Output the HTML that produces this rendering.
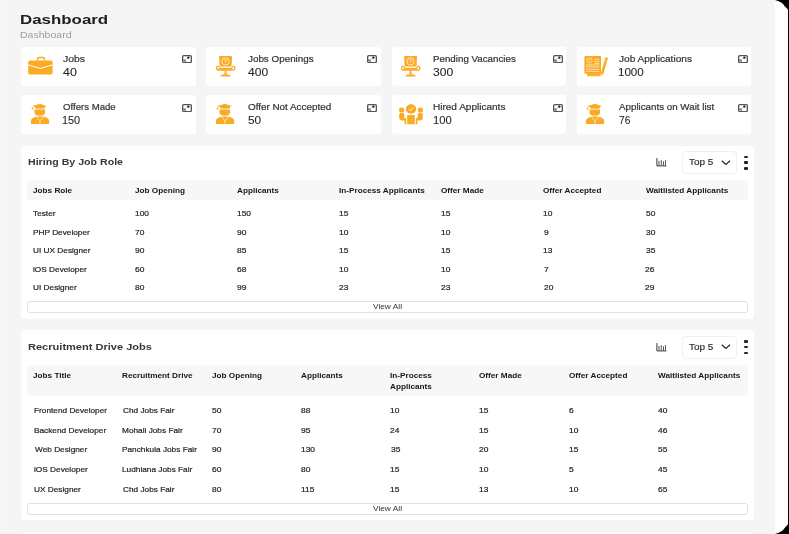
<!DOCTYPE html>
<html><head><meta charset="utf-8"><style>
html,body{margin:0;padding:0;}
body{width:789px;height:534px;overflow:hidden;background:#000;position:relative;font-family:"Liberation Sans",sans-serif;}
.t{position:absolute;white-space:nowrap;line-height:normal;transform-origin:0 0;will-change:transform;}
svg{display:block}
</style></head><body>
<div style="position:absolute;left:0px;top:0px;width:775px;height:534px;background:#f5f5f5"></div>
<div style="position:absolute;left:0px;top:0px;width:1px;height:534px;background:#f8f8f8"></div>
<div style="position:absolute;left:775px;top:0px;width:13px;height:534px;background:#fff;clip-path:polygon(0 0,3px 1px,5px 2px,7px 3px,8.5px 4.5px,9.5px 6px,11px 7.5px,12.5px 9px,13px 10px,13px 524px,12.5px 525px,11px 526.5px,9.5px 528px,8.5px 529.5px,7px 531px,5px 532px,3px 533px,0 534px)"></div>
<div class="t" style="left:20.35px;top:11.80px;font-size:13.2px;color:#1e1e1e;font-weight:bold;letter-spacing:0.000px;transform:scaleX(1.2798);">Dashboard</div>
<div class="t" style="left:20.28px;top:30.00px;font-size:9px;color:#9d9d9d;letter-spacing:0.000px;transform:scaleX(1.1710);">Dashboard</div>
<div style="position:absolute;left:21.0px;top:47px;width:174.7px;height:39px;background:#fff;border-radius:3px"></div>
<div class="t" style="left:62.98px;top:54.20px;font-size:9px;color:#343434;letter-spacing:0.000px;transform:scaleX(1.1559);-webkit-text-stroke:0.2px #343434;">Jobs</div>
<div class="t" style="left:62.85px;top:66.90px;font-size:10px;color:#262626;letter-spacing:0.000px;transform:scaleX(1.2453);-webkit-text-stroke:0.08px #262626;">40</div>
<div style="position:absolute;left:27px;top:54px;width:27px;height:27px"><svg width="27" height="27" viewBox="0 0 27 27"><path d="M10.6 6.6 V4.8 a1.2 1.2 0 0 1 1.2-1.2 h4.5 a1.2 1.2 0 0 1 1.2 1.2 V6.6" fill="none" stroke="#fbaa24" stroke-width="1.5"/><rect x="1.2" y="6.4" width="24.4" height="14.2" rx="2" fill="#fbaa24"/><path d="M1.2 10.9 L13.4 14.4 L25.6 10.9" fill="none" stroke="#fff" stroke-width="1"/></svg></div>
<div style="position:absolute;left:182.00px;top:55px;width:10px;height:8px"><svg width="10" height="8" viewBox="0 0 10 8"><rect x="0.65" y="0.65" width="8.7" height="6.9" rx="1.1" fill="none" stroke="#555" stroke-width="1.3"/><path d="M3.4 4.6 L6 2.9" stroke="#aaa" stroke-width="0.8"/><circle cx="6.4" cy="2.7" r="1.15" fill="#1a1a1a"/><path d="M1.1 5.1 H3.1 V7.2" fill="none" stroke="#444" stroke-width="1"/></svg></div>
<div style="position:absolute;left:206.27px;top:47px;width:174.7px;height:39px;background:#fff;border-radius:3px"></div>
<div class="t" style="left:248.49px;top:54.20px;font-size:9px;color:#343434;letter-spacing:0.000px;transform:scaleX(1.0940);-webkit-text-stroke:0.2px #343434;">Jobs Openings</div>
<div class="t" style="left:248.36px;top:66.90px;font-size:10px;color:#262626;letter-spacing:0.000px;transform:scaleX(1.2112);-webkit-text-stroke:0.08px #262626;">400</div>
<div style="position:absolute;left:212px;top:54px;width:27px;height:27px"><svg width="27" height="27" viewBox="0 0 27 27">
<path d="M7.8 2.1 H19.4 Q20 2.1 20 2.8 L19.6 11.6 Q19.5 12.6 18.6 12.6 H8.6 Q7.7 12.6 7.6 11.6 L7.1 2.8 Q7.1 2.1 7.8 2.1Z" fill="#fbaa24"/>
<circle cx="13.5" cy="7.4" r="3.6" fill="none" stroke="#fff" stroke-width="0.7"/>
<path d="M12.4 6.6 Q12.5 5.5 13.6 5.5 Q14.7 5.6 14.6 6.6 Q14.5 7.3 13.6 7.8 V8.6" fill="none" stroke="#fff" stroke-width="0.8"/>
<path d="M7.6 13.4 Q4.6 11 4.6 14 Q4.7 16.2 7 16.3 M19.6 13.4 Q22.8 11 22.8 14 Q22.7 16.2 20.4 16.3" fill="none" stroke="#fbaa24" stroke-width="1.4"/>
<rect x="6.8" y="13.7" width="13.6" height="3" rx="0.8" fill="#fbaa24"/>
<path d="M12.6 16.6 H14.5 L14.6 19.4 Q15 20.4 16.5 20.6 H10.6 Q12.2 20.4 12.5 19.4Z" fill="#fbaa24"/>
<path d="M10 20.4 H17.2 L19 22.6 H8Z" fill="#fbaa24"/>
</svg></div>
<div style="position:absolute;left:367.27px;top:55px;width:10px;height:8px"><svg width="10" height="8" viewBox="0 0 10 8"><rect x="0.65" y="0.65" width="8.7" height="6.9" rx="1.1" fill="none" stroke="#555" stroke-width="1.3"/><path d="M3.4 4.6 L6 2.9" stroke="#aaa" stroke-width="0.8"/><circle cx="6.4" cy="2.7" r="1.15" fill="#1a1a1a"/><path d="M1.1 5.1 H3.1 V7.2" fill="none" stroke="#444" stroke-width="1"/></svg></div>
<div style="position:absolute;left:391.54px;top:47px;width:174.7px;height:39px;background:#fff;border-radius:3px"></div>
<div class="t" style="left:433.14px;top:54.20px;font-size:9px;color:#343434;letter-spacing:0.000px;transform:scaleX(1.0842);-webkit-text-stroke:0.2px #343434;">Pending Vacancies</div>
<div class="t" style="left:433.42px;top:66.90px;font-size:10px;color:#262626;letter-spacing:0.000px;transform:scaleX(1.2075);-webkit-text-stroke:0.08px #262626;">300</div>
<div style="position:absolute;left:397px;top:54px;width:27px;height:27px"><svg width="27" height="27" viewBox="0 0 27 27">
<path d="M7.8 2.1 H19.4 Q20 2.1 20 2.8 L19.6 11.6 Q19.5 12.6 18.6 12.6 H8.6 Q7.7 12.6 7.6 11.6 L7.1 2.8 Q7.1 2.1 7.8 2.1Z" fill="#fbaa24"/>
<circle cx="13.5" cy="7.4" r="3.6" fill="none" stroke="#fff" stroke-width="0.7"/>
<path d="M12.4 6.6 Q12.5 5.5 13.6 5.5 Q14.7 5.6 14.6 6.6 Q14.5 7.3 13.6 7.8 V8.6" fill="none" stroke="#fff" stroke-width="0.8"/>
<path d="M7.6 13.4 Q4.6 11 4.6 14 Q4.7 16.2 7 16.3 M19.6 13.4 Q22.8 11 22.8 14 Q22.7 16.2 20.4 16.3" fill="none" stroke="#fbaa24" stroke-width="1.4"/>
<rect x="6.8" y="13.7" width="13.6" height="3" rx="0.8" fill="#fbaa24"/>
<path d="M12.6 16.6 H14.5 L14.6 19.4 Q15 20.4 16.5 20.6 H10.6 Q12.2 20.4 12.5 19.4Z" fill="#fbaa24"/>
<path d="M10 20.4 H17.2 L19 22.6 H8Z" fill="#fbaa24"/>
</svg></div>
<div style="position:absolute;left:552.54px;top:55px;width:10px;height:8px"><svg width="10" height="8" viewBox="0 0 10 8"><rect x="0.65" y="0.65" width="8.7" height="6.9" rx="1.1" fill="none" stroke="#555" stroke-width="1.3"/><path d="M3.4 4.6 L6 2.9" stroke="#aaa" stroke-width="0.8"/><circle cx="6.4" cy="2.7" r="1.15" fill="#1a1a1a"/><path d="M1.1 5.1 H3.1 V7.2" fill="none" stroke="#444" stroke-width="1"/></svg></div>
<div style="position:absolute;left:576.81px;top:47px;width:174.7px;height:39px;background:#fff;border-radius:3px"></div>
<div class="t" style="left:618.99px;top:54.20px;font-size:9px;color:#343434;letter-spacing:0.000px;transform:scaleX(1.1214);-webkit-text-stroke:0.2px #343434;">Job Applications</div>
<div class="t" style="left:618.29px;top:66.90px;font-size:10px;color:#262626;letter-spacing:0.000px;transform:scaleX(1.1557);-webkit-text-stroke:0.08px #262626;">1000</div>
<div style="position:absolute;left:582px;top:54px;width:27px;height:27px"><svg width="27" height="27" viewBox="0 0 27 27">
<rect x="5.1" y="18" width="13.6" height="4.3" rx="0.4" fill="#fbaa24" opacity="0.92"/>
<rect x="2.4" y="2.1" width="16.6" height="17.6" rx="0.8" fill="#fbaa24"/>
<circle cx="7.5" cy="6.5" r="2.6" fill="none" stroke="#fff" stroke-width="0.65" opacity="0.85"/>
<circle cx="7.5" cy="6.2" r="1" fill="#fff" opacity="0.5"/>
<path d="M12.4 5.5 H17.3 M12.4 7.5 H17.3 M12.4 9.4 H17.3 M4.1 10.9 H17.3 M4.1 12.9 H17.3 M4.1 15.3 H17.3 M4.1 17.4 H17.3" stroke="#fff" stroke-width="0.75" opacity="0.8"/>
<path d="M24.4 4.6 L20.3 19.2" stroke="#fbaa24" stroke-width="2.6" stroke-linecap="round"/>
<path d="M20.6 19.6 L19.4 21.6 L19.6 19.2Z" fill="#fbaa24"/>
<path d="M22.4 6.6 L24.1 7.1" stroke="#fff" stroke-width="0.6"/>
</svg></div>
<div style="position:absolute;left:737.81px;top:55px;width:10px;height:8px"><svg width="10" height="8" viewBox="0 0 10 8"><rect x="0.65" y="0.65" width="8.7" height="6.9" rx="1.1" fill="none" stroke="#555" stroke-width="1.3"/><path d="M3.4 4.6 L6 2.9" stroke="#aaa" stroke-width="0.8"/><circle cx="6.4" cy="2.7" r="1.15" fill="#1a1a1a"/><path d="M1.1 5.1 H3.1 V7.2" fill="none" stroke="#444" stroke-width="1"/></svg></div>
<div style="position:absolute;left:21.0px;top:94.5px;width:174.7px;height:39px;background:#fff;border-radius:3px"></div>
<div class="t" style="left:62.77px;top:102.00px;font-size:9px;color:#343434;letter-spacing:0.000px;transform:scaleX(1.0678);-webkit-text-stroke:0.2px #343434;">Offers Made</div>
<div class="t" style="left:62.44px;top:115.20px;font-size:10px;color:#262626;letter-spacing:0.000px;transform:scaleX(1.0897);-webkit-text-stroke:0.08px #262626;">150</div>
<div style="position:absolute;left:27px;top:102px;width:27px;height:27px"><svg width="27" height="27" viewBox="0 0 27 27">
<path d="M4.9 4.3 L13 1.7 L20 4.3 L13 6.3Z" fill="#fbaa24"/>
<rect x="8.2" y="4.6" width="9.6" height="2" fill="#fbaa24"/>
<circle cx="5.6" cy="6.6" r="1" fill="#fbaa24"/>
<path d="M7.5 7.4 H18 V10.2 Q18 13.8 12.75 13.8 Q7.5 13.8 7.5 10.2Z" fill="#fbaa24"/>
<path d="M3.9 22 V19.6 Q3.9 14.6 13 14.6 Q22.2 14.6 22.2 19.6 V22Z" fill="#fbaa24"/>
<path d="M9.6 15.2 L13 19 L16.4 15.2 M13 19 V22" fill="none" stroke="#fff" stroke-width="0.7" opacity="0.9"/>
</svg></div>
<div style="position:absolute;left:182.00px;top:103.5px;width:10px;height:8px"><svg width="10" height="8" viewBox="0 0 10 8"><rect x="0.65" y="0.65" width="8.7" height="6.9" rx="1.1" fill="none" stroke="#555" stroke-width="1.3"/><path d="M3.4 4.6 L6 2.9" stroke="#aaa" stroke-width="0.8"/><circle cx="6.4" cy="2.7" r="1.15" fill="#1a1a1a"/><path d="M1.1 5.1 H3.1 V7.2" fill="none" stroke="#444" stroke-width="1"/></svg></div>
<div style="position:absolute;left:206.27px;top:94.5px;width:174.7px;height:39px;background:#fff;border-radius:3px"></div>
<div class="t" style="left:248.16px;top:102.00px;font-size:9px;color:#343434;letter-spacing:0.000px;transform:scaleX(1.0954);-webkit-text-stroke:0.2px #343434;">Offer Not Accepted</div>
<div class="t" style="left:248.13px;top:115.20px;font-size:10px;color:#262626;letter-spacing:0.000px;transform:scaleX(1.1827);-webkit-text-stroke:0.08px #262626;">50</div>
<div style="position:absolute;left:212px;top:102px;width:27px;height:27px"><svg width="27" height="27" viewBox="0 0 27 27">
<path d="M4.9 4.3 L13 1.7 L20 4.3 L13 6.3Z" fill="#fbaa24"/>
<rect x="8.2" y="4.6" width="9.6" height="2" fill="#fbaa24"/>
<circle cx="5.6" cy="6.6" r="1" fill="#fbaa24"/>
<path d="M7.5 7.4 H18 V10.2 Q18 13.8 12.75 13.8 Q7.5 13.8 7.5 10.2Z" fill="#fbaa24"/>
<path d="M3.9 22 V19.6 Q3.9 14.6 13 14.6 Q22.2 14.6 22.2 19.6 V22Z" fill="#fbaa24"/>
<path d="M9.6 15.2 L13 19 L16.4 15.2 M13 19 V22" fill="none" stroke="#fff" stroke-width="0.7" opacity="0.9"/>
</svg></div>
<div style="position:absolute;left:367.27px;top:103.5px;width:10px;height:8px"><svg width="10" height="8" viewBox="0 0 10 8"><rect x="0.65" y="0.65" width="8.7" height="6.9" rx="1.1" fill="none" stroke="#555" stroke-width="1.3"/><path d="M3.4 4.6 L6 2.9" stroke="#aaa" stroke-width="0.8"/><circle cx="6.4" cy="2.7" r="1.15" fill="#1a1a1a"/><path d="M1.1 5.1 H3.1 V7.2" fill="none" stroke="#444" stroke-width="1"/></svg></div>
<div style="position:absolute;left:391.54px;top:94.5px;width:174.7px;height:39px;background:#fff;border-radius:3px"></div>
<div class="t" style="left:433.32px;top:102.00px;font-size:9px;color:#343434;letter-spacing:0.000px;transform:scaleX(1.1132);-webkit-text-stroke:0.2px #343434;">Hired Applicants</div>
<div class="t" style="left:433.31px;top:115.20px;font-size:10px;color:#262626;letter-spacing:0.000px;transform:scaleX(1.1218);-webkit-text-stroke:0.08px #262626;">100</div>
<div style="position:absolute;left:397px;top:102px;width:27px;height:27px"><svg width="27" height="27" viewBox="0 0 27 27">
<ellipse cx="14" cy="7" rx="5.2" ry="4.7" fill="#fbaa24"/>
<path d="M11.8 7.2 L13.5 8.7 L16.1 5.7" fill="none" stroke="#fff" stroke-width="1"/>
<rect x="10.2" y="13.1" width="7.6" height="9.2" fill="#fbaa24"/>
<circle cx="4.6" cy="8" r="2.6" fill="#fbaa24"/>
<circle cx="23.4" cy="8" r="2.6" fill="#fbaa24"/>
<path d="M2.2 12.4 Q2.2 10.9 3.6 10.9 H5.8 Q7.3 10.9 7.3 12.4 V16 H9.2 V22.3 H7.6 V18.4 H4.6 Q2.2 18.4 2.2 16Z" fill="#fbaa24"/>
<path d="M25.8 12.4 Q25.8 10.9 24.4 10.9 H22.2 Q20.7 10.9 20.7 12.4 V16 H18.8 V22.3 H20.4 V18.4 H23.4 Q25.8 18.4 25.8 16Z" fill="#fbaa24"/>
</svg></div>
<div style="position:absolute;left:552.54px;top:103.5px;width:10px;height:8px"><svg width="10" height="8" viewBox="0 0 10 8"><rect x="0.65" y="0.65" width="8.7" height="6.9" rx="1.1" fill="none" stroke="#555" stroke-width="1.3"/><path d="M3.4 4.6 L6 2.9" stroke="#aaa" stroke-width="0.8"/><circle cx="6.4" cy="2.7" r="1.15" fill="#1a1a1a"/><path d="M1.1 5.1 H3.1 V7.2" fill="none" stroke="#444" stroke-width="1"/></svg></div>
<div style="position:absolute;left:576.81px;top:94.5px;width:174.7px;height:39px;background:#fff;border-radius:3px"></div>
<div class="t" style="left:619.40px;top:102.00px;font-size:9px;color:#343434;letter-spacing:0.000px;transform:scaleX(1.0852);-webkit-text-stroke:0.2px #343434;">Applicants on Wait list</div>
<div class="t" style="left:618.89px;top:115.20px;font-size:10px;color:#262626;letter-spacing:0.000px;transform:scaleX(1.0196);-webkit-text-stroke:0.08px #262626;">76</div>
<div style="position:absolute;left:582px;top:102px;width:27px;height:27px"><svg width="27" height="27" viewBox="0 0 27 27">
<path d="M4.9 4.3 L13 1.7 L20 4.3 L13 6.3Z" fill="#fbaa24"/>
<rect x="8.2" y="4.6" width="9.6" height="2" fill="#fbaa24"/>
<circle cx="5.6" cy="6.6" r="1" fill="#fbaa24"/>
<path d="M7.5 7.4 H18 V10.2 Q18 13.8 12.75 13.8 Q7.5 13.8 7.5 10.2Z" fill="#fbaa24"/>
<path d="M3.9 22 V19.6 Q3.9 14.6 13 14.6 Q22.2 14.6 22.2 19.6 V22Z" fill="#fbaa24"/>
<path d="M9.6 15.2 L13 19 L16.4 15.2 M13 19 V22" fill="none" stroke="#fff" stroke-width="0.7" opacity="0.9"/>
</svg></div>
<div style="position:absolute;left:737.81px;top:103.5px;width:10px;height:8px"><svg width="10" height="8" viewBox="0 0 10 8"><rect x="0.65" y="0.65" width="8.7" height="6.9" rx="1.1" fill="none" stroke="#555" stroke-width="1.3"/><path d="M3.4 4.6 L6 2.9" stroke="#aaa" stroke-width="0.8"/><circle cx="6.4" cy="2.7" r="1.15" fill="#1a1a1a"/><path d="M1.1 5.1 H3.1 V7.2" fill="none" stroke="#444" stroke-width="1"/></svg></div>
<div style="position:absolute;left:21px;top:145.5px;width:733px;height:173px;background:#fff;border-radius:4px"></div>
<div class="t" style="left:27.65px;top:156.00px;font-size:9.8px;color:#383838;font-weight:bold;letter-spacing:0.000px;transform:scaleX(1.0842);">Hiring By Job Role</div>
<div style="position:absolute;left:656px;top:158.1px;width:11px;height:9px"><svg width="11" height="9" viewBox="0 0 11 9"><path d="M0.9 0.1 V7.9 H10.4" fill="none" stroke="#333" stroke-width="1"/><path d="M3 7.6 V2.9 M5.3 7.6 V2.1 M7.5 7.6 V3.3 M9.5 7.6 V2.1" stroke="#444" stroke-width="0.9"/></svg></div>
<div style="position:absolute;left:682.3px;top:151.2px;width:55px;height:23px;border:1px solid #f0f0f0;border-radius:4px;box-sizing:border-box"></div>
<div class="t" style="left:689.07px;top:157.10px;font-size:8.6px;color:#2e2e2e;letter-spacing:0.000px;transform:scaleX(1.1589);-webkit-text-stroke:0.15px #2e2e2e;">Top 5</div>
<div style="position:absolute;left:721px;top:159.5px;width:10px;height:6px"><svg width="10" height="6" viewBox="0 0 10 6"><path d="M0.8 0.7 L4.9 4.4 L9 0.7" fill="none" stroke="#222" stroke-width="1.15"/></svg></div>
<div style="position:absolute;left:744.1px;top:155.5px;width:4px;height:2.6px;background:#262626;border-radius:1px"></div>
<div style="position:absolute;left:744.1px;top:161.4px;width:4px;height:2.6px;background:#262626;border-radius:1px"></div>
<div style="position:absolute;left:744.1px;top:167.3px;width:4px;height:2.6px;background:#262626;border-radius:1px"></div>
<div style="position:absolute;left:27.3px;top:180px;width:720.9px;height:19.5px;background:#f7f7f7;border-radius:4px"></div>
<div class="t" style="left:32.90px;top:185.80px;font-size:7.8px;color:#161616;font-weight:bold;letter-spacing:0.000px;transform:scaleX(1.0500);">Jobs Role</div>
<div class="t" style="left:135.09px;top:185.80px;font-size:7.8px;color:#161616;font-weight:bold;letter-spacing:0.000px;transform:scaleX(1.0500);">Job Opening</div>
<div class="t" style="left:236.89px;top:185.80px;font-size:7.8px;color:#161616;font-weight:bold;letter-spacing:0.000px;transform:scaleX(1.0500);">Applicants</div>
<div class="t" style="left:338.98px;top:185.80px;font-size:7.8px;color:#161616;font-weight:bold;letter-spacing:0.000px;transform:scaleX(1.0500);">In-Process Applicants</div>
<div class="t" style="left:440.88px;top:185.80px;font-size:7.8px;color:#161616;font-weight:bold;letter-spacing:0.000px;transform:scaleX(1.0500);">Offer Made</div>
<div class="t" style="left:543.38px;top:185.80px;font-size:7.8px;color:#161616;font-weight:bold;letter-spacing:0.000px;transform:scaleX(1.0500);">Offer Accepted</div>
<div class="t" style="left:645.60px;top:185.80px;font-size:7.8px;color:#161616;font-weight:bold;letter-spacing:0.000px;transform:scaleX(1.0500);">Waitlisted Applicants</div>
<div class="t" style="left:33.19px;top:208.80px;font-size:7.8px;color:#1e1e1e;letter-spacing:0.000px;transform:scaleX(1.0600);-webkit-text-stroke:0.2px #1e1e1e;">Tester</div>
<div class="t" style="left:134.85px;top:208.80px;font-size:7.8px;color:#1e1e1e;letter-spacing:0.000px;transform:scaleX(1.0800);-webkit-text-stroke:0.2px #1e1e1e;">100</div>
<div class="t" style="left:236.75px;top:208.80px;font-size:7.8px;color:#1e1e1e;letter-spacing:0.000px;transform:scaleX(1.0800);-webkit-text-stroke:0.2px #1e1e1e;">150</div>
<div class="t" style="left:339.15px;top:208.80px;font-size:7.8px;color:#1e1e1e;letter-spacing:0.000px;transform:scaleX(1.0800);-webkit-text-stroke:0.2px #1e1e1e;">15</div>
<div class="t" style="left:440.85px;top:208.80px;font-size:7.8px;color:#1e1e1e;letter-spacing:0.000px;transform:scaleX(1.0800);-webkit-text-stroke:0.2px #1e1e1e;">15</div>
<div class="t" style="left:543.35px;top:208.80px;font-size:7.8px;color:#1e1e1e;letter-spacing:0.000px;transform:scaleX(1.0800);-webkit-text-stroke:0.2px #1e1e1e;">10</div>
<div class="t" style="left:645.58px;top:208.80px;font-size:7.8px;color:#1e1e1e;letter-spacing:0.000px;transform:scaleX(1.0800);-webkit-text-stroke:0.2px #1e1e1e;">50</div>
<div class="t" style="left:32.66px;top:227.60px;font-size:7.8px;color:#1e1e1e;letter-spacing:0.000px;transform:scaleX(1.0600);-webkit-text-stroke:0.2px #1e1e1e;">PHP Developer</div>
<div class="t" style="left:135.07px;top:227.60px;font-size:7.8px;color:#1e1e1e;letter-spacing:0.000px;transform:scaleX(1.0800);-webkit-text-stroke:0.2px #1e1e1e;">70</div>
<div class="t" style="left:237.08px;top:227.60px;font-size:7.8px;color:#1e1e1e;letter-spacing:0.000px;transform:scaleX(1.0800);-webkit-text-stroke:0.2px #1e1e1e;">90</div>
<div class="t" style="left:339.15px;top:227.60px;font-size:7.8px;color:#1e1e1e;letter-spacing:0.000px;transform:scaleX(1.0800);-webkit-text-stroke:0.2px #1e1e1e;">10</div>
<div class="t" style="left:440.85px;top:227.60px;font-size:7.8px;color:#1e1e1e;letter-spacing:0.000px;transform:scaleX(1.0800);-webkit-text-stroke:0.2px #1e1e1e;">10</div>
<div class="t" style="left:543.68px;top:227.60px;font-size:7.8px;color:#1e1e1e;letter-spacing:0.000px;transform:scaleX(1.0800);-webkit-text-stroke:0.2px #1e1e1e;">9</div>
<div class="t" style="left:645.58px;top:227.60px;font-size:7.8px;color:#1e1e1e;letter-spacing:0.000px;transform:scaleX(1.0800);-webkit-text-stroke:0.2px #1e1e1e;">30</div>
<div class="t" style="left:32.66px;top:246.10px;font-size:7.8px;color:#1e1e1e;letter-spacing:0.000px;transform:scaleX(1.0600);-webkit-text-stroke:0.2px #1e1e1e;">UI UX Designer</div>
<div class="t" style="left:135.18px;top:246.10px;font-size:7.8px;color:#1e1e1e;letter-spacing:0.000px;transform:scaleX(1.0800);-webkit-text-stroke:0.2px #1e1e1e;">90</div>
<div class="t" style="left:237.08px;top:246.10px;font-size:7.8px;color:#1e1e1e;letter-spacing:0.000px;transform:scaleX(1.0800);-webkit-text-stroke:0.2px #1e1e1e;">85</div>
<div class="t" style="left:339.15px;top:246.10px;font-size:7.8px;color:#1e1e1e;letter-spacing:0.000px;transform:scaleX(1.0800);-webkit-text-stroke:0.2px #1e1e1e;">15</div>
<div class="t" style="left:440.85px;top:246.10px;font-size:7.8px;color:#1e1e1e;letter-spacing:0.000px;transform:scaleX(1.0800);-webkit-text-stroke:0.2px #1e1e1e;">15</div>
<div class="t" style="left:543.35px;top:246.10px;font-size:7.8px;color:#1e1e1e;letter-spacing:0.000px;transform:scaleX(1.0800);-webkit-text-stroke:0.2px #1e1e1e;">13</div>
<div class="t" style="left:645.58px;top:246.10px;font-size:7.8px;color:#1e1e1e;letter-spacing:0.000px;transform:scaleX(1.0800);-webkit-text-stroke:0.2px #1e1e1e;">35</div>
<div class="t" style="left:32.77px;top:264.70px;font-size:7.8px;color:#1e1e1e;letter-spacing:0.000px;transform:scaleX(1.0600);-webkit-text-stroke:0.2px #1e1e1e;">iOS Developer</div>
<div class="t" style="left:135.07px;top:264.70px;font-size:7.8px;color:#1e1e1e;letter-spacing:0.000px;transform:scaleX(1.0800);-webkit-text-stroke:0.2px #1e1e1e;">60</div>
<div class="t" style="left:236.97px;top:264.70px;font-size:7.8px;color:#1e1e1e;letter-spacing:0.000px;transform:scaleX(1.0800);-webkit-text-stroke:0.2px #1e1e1e;">68</div>
<div class="t" style="left:339.15px;top:264.70px;font-size:7.8px;color:#1e1e1e;letter-spacing:0.000px;transform:scaleX(1.0800);-webkit-text-stroke:0.2px #1e1e1e;">10</div>
<div class="t" style="left:440.85px;top:264.70px;font-size:7.8px;color:#1e1e1e;letter-spacing:0.000px;transform:scaleX(1.0800);-webkit-text-stroke:0.2px #1e1e1e;">10</div>
<div class="t" style="left:543.57px;top:264.70px;font-size:7.8px;color:#1e1e1e;letter-spacing:0.000px;transform:scaleX(1.0800);-webkit-text-stroke:0.2px #1e1e1e;">7</div>
<div class="t" style="left:645.47px;top:264.70px;font-size:7.8px;color:#1e1e1e;letter-spacing:0.000px;transform:scaleX(1.0800);-webkit-text-stroke:0.2px #1e1e1e;">26</div>
<div class="t" style="left:32.66px;top:283.00px;font-size:7.8px;color:#1e1e1e;letter-spacing:0.000px;transform:scaleX(1.0600);-webkit-text-stroke:0.2px #1e1e1e;">UI Designer</div>
<div class="t" style="left:135.18px;top:283.00px;font-size:7.8px;color:#1e1e1e;letter-spacing:0.000px;transform:scaleX(1.0800);-webkit-text-stroke:0.2px #1e1e1e;">80</div>
<div class="t" style="left:237.08px;top:283.00px;font-size:7.8px;color:#1e1e1e;letter-spacing:0.000px;transform:scaleX(1.0800);-webkit-text-stroke:0.2px #1e1e1e;">99</div>
<div class="t" style="left:339.37px;top:283.00px;font-size:7.8px;color:#1e1e1e;letter-spacing:0.000px;transform:scaleX(1.0800);-webkit-text-stroke:0.2px #1e1e1e;">23</div>
<div class="t" style="left:441.07px;top:283.00px;font-size:7.8px;color:#1e1e1e;letter-spacing:0.000px;transform:scaleX(1.0800);-webkit-text-stroke:0.2px #1e1e1e;">23</div>
<div class="t" style="left:543.57px;top:283.00px;font-size:7.8px;color:#1e1e1e;letter-spacing:0.000px;transform:scaleX(1.0800);-webkit-text-stroke:0.2px #1e1e1e;">20</div>
<div class="t" style="left:645.47px;top:283.00px;font-size:7.8px;color:#1e1e1e;letter-spacing:0.000px;transform:scaleX(1.0800);-webkit-text-stroke:0.2px #1e1e1e;">29</div>
<div style="position:absolute;left:27.4px;top:301.4px;width:720.8px;height:11.5px;border:1px solid #e2e2e2;border-radius:3px;box-sizing:border-box"></div>
<div class="t" style="left:373.00px;top:303.40px;font-size:7px;color:#333;letter-spacing:0.000px;transform:scaleX(1.1885);">View All</div>
<div style="position:absolute;left:21px;top:330px;width:733px;height:190px;background:#fff;border-radius:4px"></div>
<div class="t" style="left:27.62px;top:341.20px;font-size:9.8px;color:#383838;font-weight:bold;letter-spacing:0.000px;transform:scaleX(1.1274);">Recruitment Drive Jobs</div>
<div style="position:absolute;left:656px;top:342.6px;width:11px;height:9px"><svg width="11" height="9" viewBox="0 0 11 9"><path d="M0.9 0.1 V7.9 H10.4" fill="none" stroke="#333" stroke-width="1"/><path d="M3 7.6 V2.9 M5.3 7.6 V2.1 M7.5 7.6 V3.3 M9.5 7.6 V2.1" stroke="#444" stroke-width="0.9"/></svg></div>
<div style="position:absolute;left:682.3px;top:335.7px;width:55px;height:23px;border:1px solid #f0f0f0;border-radius:4px;box-sizing:border-box"></div>
<div class="t" style="left:689.07px;top:341.60px;font-size:8.6px;color:#2e2e2e;letter-spacing:0.000px;transform:scaleX(1.1589);-webkit-text-stroke:0.15px #2e2e2e;">Top 5</div>
<div style="position:absolute;left:721px;top:344px;width:10px;height:6px"><svg width="10" height="6" viewBox="0 0 10 6"><path d="M0.8 0.7 L4.9 4.4 L9 0.7" fill="none" stroke="#222" stroke-width="1.15"/></svg></div>
<div style="position:absolute;left:744.1px;top:340.0px;width:4px;height:2.6px;background:#262626;border-radius:1px"></div>
<div style="position:absolute;left:744.1px;top:345.9px;width:4px;height:2.6px;background:#262626;border-radius:1px"></div>
<div style="position:absolute;left:744.1px;top:351.8px;width:4px;height:2.6px;background:#262626;border-radius:1px"></div>
<div style="position:absolute;left:27.3px;top:365px;width:720.9px;height:30.5px;background:#f7f7f7;border-radius:4px"></div>
<div class="t" style="left:33.10px;top:370.60px;font-size:7.8px;color:#161616;font-weight:bold;letter-spacing:0.000px;transform:scaleX(1.0500);">Jobs Title</div>
<div class="t" style="left:122.17px;top:370.60px;font-size:7.8px;color:#161616;font-weight:bold;letter-spacing:0.000px;transform:scaleX(1.0500);">Recruitment Drive</div>
<div class="t" style="left:211.80px;top:370.60px;font-size:7.8px;color:#161616;font-weight:bold;letter-spacing:0.000px;transform:scaleX(1.0500);">Job Opening</div>
<div class="t" style="left:300.69px;top:370.60px;font-size:7.8px;color:#161616;font-weight:bold;letter-spacing:0.000px;transform:scaleX(1.0500);">Applicants</div>
<div class="t" style="left:390.08px;top:370.60px;font-size:7.8px;color:#161616;font-weight:bold;letter-spacing:0.000px;transform:scaleX(1.0500);">In-Process</div>
<div class="t" style="left:390.39px;top:381.50px;font-size:7.8px;color:#161616;font-weight:bold;letter-spacing:0.000px;transform:scaleX(1.0500);">Applicants</div>
<div class="t" style="left:479.29px;top:370.60px;font-size:7.8px;color:#161616;font-weight:bold;letter-spacing:0.000px;transform:scaleX(1.0500);">Offer Made</div>
<div class="t" style="left:568.58px;top:370.60px;font-size:7.8px;color:#161616;font-weight:bold;letter-spacing:0.000px;transform:scaleX(1.0500);">Offer Accepted</div>
<div class="t" style="left:658.40px;top:370.60px;font-size:7.8px;color:#161616;font-weight:bold;letter-spacing:0.000px;transform:scaleX(1.0500);">Waitlisted Applicants</div>
<div class="t" style="left:34.06px;top:406.00px;font-size:7.8px;color:#1e1e1e;letter-spacing:0.000px;transform:scaleX(1.0600);-webkit-text-stroke:0.2px #1e1e1e;">Frontend Developer</div>
<div class="t" style="left:122.58px;top:406.00px;font-size:7.8px;color:#1e1e1e;letter-spacing:0.000px;transform:scaleX(1.0600);-webkit-text-stroke:0.2px #1e1e1e;">Chd Jobs Fair</div>
<div class="t" style="left:211.88px;top:406.00px;font-size:7.8px;color:#1e1e1e;letter-spacing:0.000px;transform:scaleX(1.0800);-webkit-text-stroke:0.2px #1e1e1e;">50</div>
<div class="t" style="left:300.88px;top:406.00px;font-size:7.8px;color:#1e1e1e;letter-spacing:0.000px;transform:scaleX(1.0800);-webkit-text-stroke:0.2px #1e1e1e;">88</div>
<div class="t" style="left:390.25px;top:406.00px;font-size:7.8px;color:#1e1e1e;letter-spacing:0.000px;transform:scaleX(1.0800);-webkit-text-stroke:0.2px #1e1e1e;">10</div>
<div class="t" style="left:479.25px;top:406.00px;font-size:7.8px;color:#1e1e1e;letter-spacing:0.000px;transform:scaleX(1.0800);-webkit-text-stroke:0.2px #1e1e1e;">15</div>
<div class="t" style="left:568.77px;top:406.00px;font-size:7.8px;color:#1e1e1e;letter-spacing:0.000px;transform:scaleX(1.0800);-webkit-text-stroke:0.2px #1e1e1e;">6</div>
<div class="t" style="left:658.48px;top:406.00px;font-size:7.8px;color:#1e1e1e;letter-spacing:0.000px;transform:scaleX(1.0800);-webkit-text-stroke:0.2px #1e1e1e;">40</div>
<div class="t" style="left:34.06px;top:425.80px;font-size:7.8px;color:#1e1e1e;letter-spacing:0.000px;transform:scaleX(1.0600);-webkit-text-stroke:0.2px #1e1e1e;">Backend Developer</div>
<div class="t" style="left:122.36px;top:425.80px;font-size:7.8px;color:#1e1e1e;letter-spacing:0.000px;transform:scaleX(1.0600);-webkit-text-stroke:0.2px #1e1e1e;">Mohali Jobs Fair</div>
<div class="t" style="left:211.77px;top:425.80px;font-size:7.8px;color:#1e1e1e;letter-spacing:0.000px;transform:scaleX(1.0800);-webkit-text-stroke:0.2px #1e1e1e;">70</div>
<div class="t" style="left:300.88px;top:425.80px;font-size:7.8px;color:#1e1e1e;letter-spacing:0.000px;transform:scaleX(1.0800);-webkit-text-stroke:0.2px #1e1e1e;">95</div>
<div class="t" style="left:390.47px;top:425.80px;font-size:7.8px;color:#1e1e1e;letter-spacing:0.000px;transform:scaleX(1.0800);-webkit-text-stroke:0.2px #1e1e1e;">24</div>
<div class="t" style="left:479.25px;top:425.80px;font-size:7.8px;color:#1e1e1e;letter-spacing:0.000px;transform:scaleX(1.0800);-webkit-text-stroke:0.2px #1e1e1e;">15</div>
<div class="t" style="left:568.55px;top:425.80px;font-size:7.8px;color:#1e1e1e;letter-spacing:0.000px;transform:scaleX(1.0800);-webkit-text-stroke:0.2px #1e1e1e;">10</div>
<div class="t" style="left:658.48px;top:425.80px;font-size:7.8px;color:#1e1e1e;letter-spacing:0.000px;transform:scaleX(1.0800);-webkit-text-stroke:0.2px #1e1e1e;">46</div>
<div class="t" style="left:34.70px;top:445.30px;font-size:7.8px;color:#1e1e1e;letter-spacing:0.000px;transform:scaleX(1.0600);-webkit-text-stroke:0.2px #1e1e1e;">Web Designer</div>
<div class="t" style="left:122.36px;top:445.30px;font-size:7.8px;color:#1e1e1e;letter-spacing:0.000px;transform:scaleX(1.0600);-webkit-text-stroke:0.2px #1e1e1e;">Panchkula Jobs Fair</div>
<div class="t" style="left:211.88px;top:445.30px;font-size:7.8px;color:#1e1e1e;letter-spacing:0.000px;transform:scaleX(1.0800);-webkit-text-stroke:0.2px #1e1e1e;">90</div>
<div class="t" style="left:300.55px;top:445.30px;font-size:7.8px;color:#1e1e1e;letter-spacing:0.000px;transform:scaleX(1.0800);-webkit-text-stroke:0.2px #1e1e1e;">130</div>
<div class="t" style="left:390.58px;top:445.30px;font-size:7.8px;color:#1e1e1e;letter-spacing:0.000px;transform:scaleX(1.0800);-webkit-text-stroke:0.2px #1e1e1e;">35</div>
<div class="t" style="left:479.47px;top:445.30px;font-size:7.8px;color:#1e1e1e;letter-spacing:0.000px;transform:scaleX(1.0800);-webkit-text-stroke:0.2px #1e1e1e;">20</div>
<div class="t" style="left:568.55px;top:445.30px;font-size:7.8px;color:#1e1e1e;letter-spacing:0.000px;transform:scaleX(1.0800);-webkit-text-stroke:0.2px #1e1e1e;">15</div>
<div class="t" style="left:658.38px;top:445.30px;font-size:7.8px;color:#1e1e1e;letter-spacing:0.000px;transform:scaleX(1.0800);-webkit-text-stroke:0.2px #1e1e1e;">55</div>
<div class="t" style="left:34.17px;top:465.00px;font-size:7.8px;color:#1e1e1e;letter-spacing:0.000px;transform:scaleX(1.0600);-webkit-text-stroke:0.2px #1e1e1e;">iOS Developer</div>
<div class="t" style="left:122.36px;top:465.00px;font-size:7.8px;color:#1e1e1e;letter-spacing:0.000px;transform:scaleX(1.0600);-webkit-text-stroke:0.2px #1e1e1e;">Ludhiana Jobs Fair</div>
<div class="t" style="left:211.77px;top:465.00px;font-size:7.8px;color:#1e1e1e;letter-spacing:0.000px;transform:scaleX(1.0800);-webkit-text-stroke:0.2px #1e1e1e;">60</div>
<div class="t" style="left:300.88px;top:465.00px;font-size:7.8px;color:#1e1e1e;letter-spacing:0.000px;transform:scaleX(1.0800);-webkit-text-stroke:0.2px #1e1e1e;">80</div>
<div class="t" style="left:390.25px;top:465.00px;font-size:7.8px;color:#1e1e1e;letter-spacing:0.000px;transform:scaleX(1.0800);-webkit-text-stroke:0.2px #1e1e1e;">15</div>
<div class="t" style="left:479.25px;top:465.00px;font-size:7.8px;color:#1e1e1e;letter-spacing:0.000px;transform:scaleX(1.0800);-webkit-text-stroke:0.2px #1e1e1e;">10</div>
<div class="t" style="left:568.88px;top:465.00px;font-size:7.8px;color:#1e1e1e;letter-spacing:0.000px;transform:scaleX(1.0800);-webkit-text-stroke:0.2px #1e1e1e;">5</div>
<div class="t" style="left:658.48px;top:465.00px;font-size:7.8px;color:#1e1e1e;letter-spacing:0.000px;transform:scaleX(1.0800);-webkit-text-stroke:0.2px #1e1e1e;">45</div>
<div class="t" style="left:34.06px;top:484.70px;font-size:7.8px;color:#1e1e1e;letter-spacing:0.000px;transform:scaleX(1.0600);-webkit-text-stroke:0.2px #1e1e1e;">UX Designer</div>
<div class="t" style="left:122.58px;top:484.70px;font-size:7.8px;color:#1e1e1e;letter-spacing:0.000px;transform:scaleX(1.0600);-webkit-text-stroke:0.2px #1e1e1e;">Chd Jobs Fair</div>
<div class="t" style="left:211.88px;top:484.70px;font-size:7.8px;color:#1e1e1e;letter-spacing:0.000px;transform:scaleX(1.0800);-webkit-text-stroke:0.2px #1e1e1e;">80</div>
<div class="t" style="left:300.55px;top:484.70px;font-size:7.8px;color:#1e1e1e;letter-spacing:0.000px;transform:scaleX(1.0800);-webkit-text-stroke:0.2px #1e1e1e;">115</div>
<div class="t" style="left:390.25px;top:484.70px;font-size:7.8px;color:#1e1e1e;letter-spacing:0.000px;transform:scaleX(1.0800);-webkit-text-stroke:0.2px #1e1e1e;">15</div>
<div class="t" style="left:479.25px;top:484.70px;font-size:7.8px;color:#1e1e1e;letter-spacing:0.000px;transform:scaleX(1.0800);-webkit-text-stroke:0.2px #1e1e1e;">13</div>
<div class="t" style="left:568.55px;top:484.70px;font-size:7.8px;color:#1e1e1e;letter-spacing:0.000px;transform:scaleX(1.0800);-webkit-text-stroke:0.2px #1e1e1e;">10</div>
<div class="t" style="left:658.27px;top:484.70px;font-size:7.8px;color:#1e1e1e;letter-spacing:0.000px;transform:scaleX(1.0800);-webkit-text-stroke:0.2px #1e1e1e;">65</div>
<div style="position:absolute;left:27.4px;top:502.6px;width:720.8px;height:12px;border:1px solid #e2e2e2;border-radius:3px;box-sizing:border-box"></div>
<div class="t" style="left:373.00px;top:504.60px;font-size:7px;color:#333;letter-spacing:0.000px;transform:scaleX(1.1885);">View All</div>
<div style="position:absolute;left:21px;top:531.5px;width:733px;height:10px;background:#fff;border-radius:5px"></div>
</body></html>
